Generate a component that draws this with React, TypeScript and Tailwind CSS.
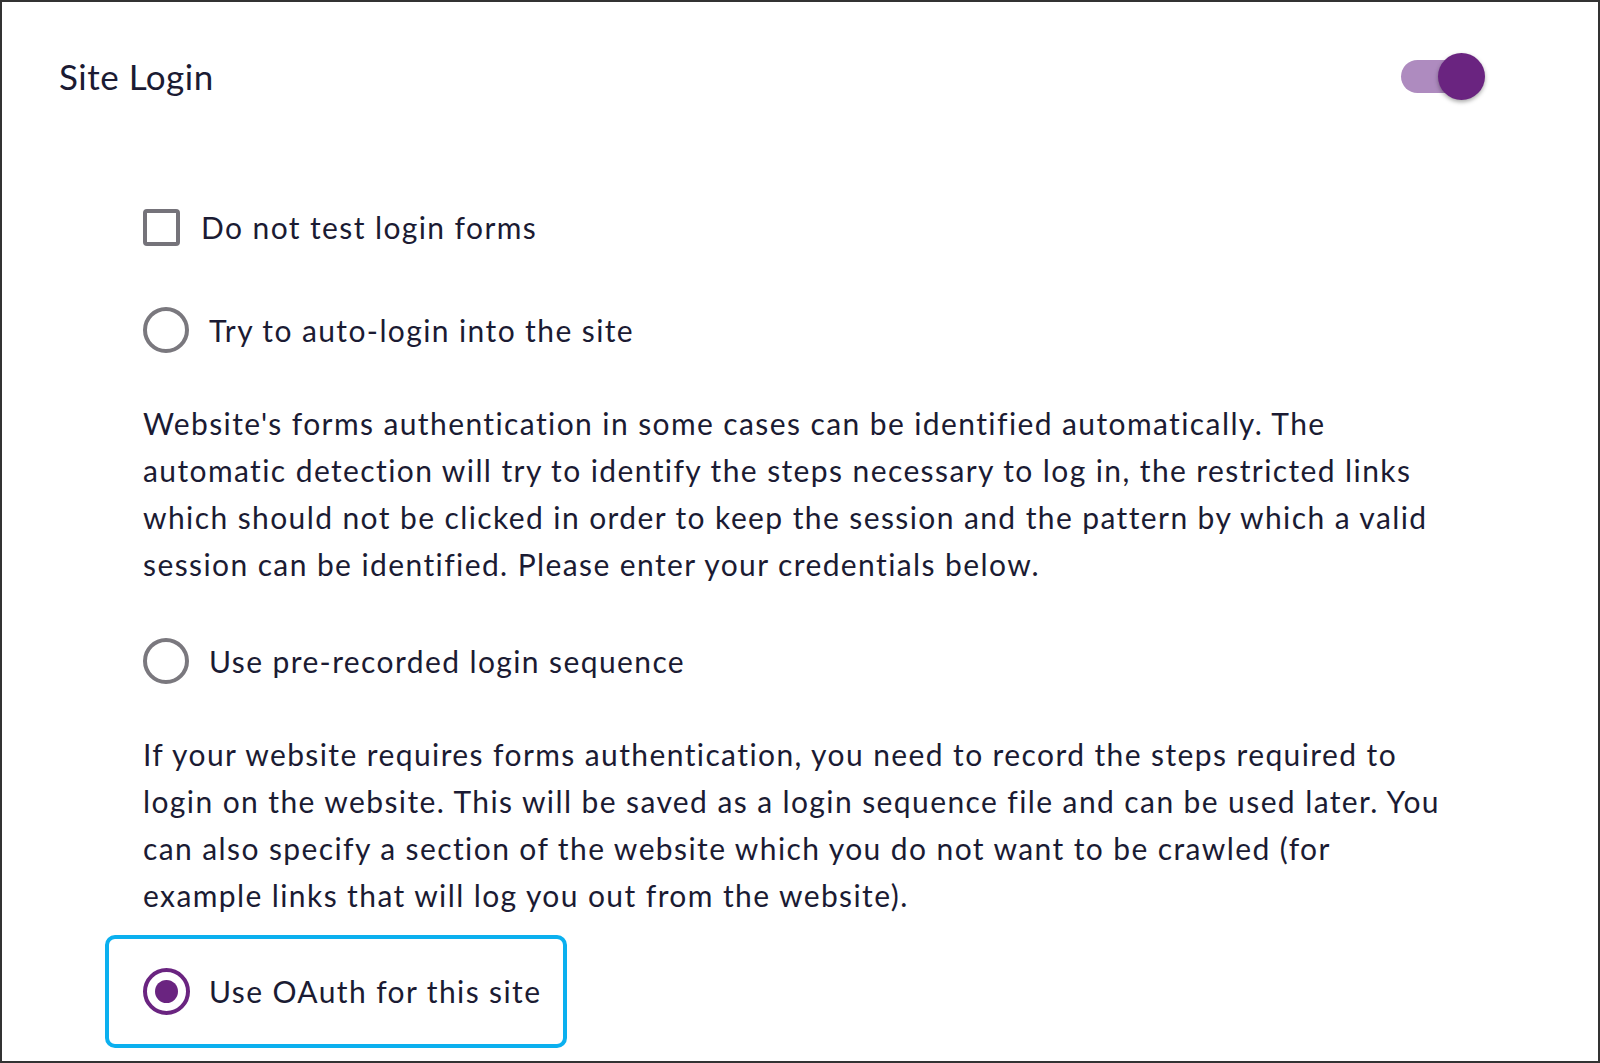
import React from 'react';

const font = { fontFamily: 'Lato, "Noto Sans", sans-serif' };

function Radio({ checked }: { checked?: boolean }) {
  if (checked) {
    return (
      <span className="flex h-[47px] w-[47px] shrink-0 items-center justify-center rounded-full border-[4px] border-[#6a2480] bg-white">
        <span className="h-[23px] w-[23px] rounded-full bg-[#6a2480]" />
      </span>
    );
  }
  return <span className="h-[46px] w-[46px] shrink-0 rounded-full border-[4px] border-[#7a787e] bg-white" />;
}

export default function App() {
  return (
    <div
      className="h-[1063px] w-[1600px] overflow-hidden border-2 border-[#333333] bg-white text-[#1b1b33]"
      style={font}
    >
      {/* Header */}
      <div className="flex h-[148px] items-center justify-between pl-[57px] pr-[113px]">
        <h1 className="text-[35px] font-normal tracking-[0.5px]">Site Login</h1>
        <div className="relative h-[47px] w-[84px]">
          <div className="absolute left-0 top-[7px] h-[33px] w-[74px] rounded-full bg-[#ae8bbf]" />
          <div className="absolute right-0 top-0 h-[47px] w-[47px] rounded-full bg-[#6a2480] shadow-[0_2px_4px_rgba(0,0,0,0.35)]" />
        </div>
      </div>

      {/* Options */}
      <div className="flex flex-col pl-[141px] text-[30px] tracking-[1.4px]">
        <label className="mt-[53px] flex h-[48px] items-center gap-[21px]">
          <span className="h-[37px] w-[37px] shrink-0 rounded-[4px] border-[4px] border-[#75737a] bg-white" />
          <span>Do not test login forms</span>
        </label>

        <label className="mt-[55px] flex h-[48px] items-center gap-[20px]">
          <Radio />
          <span>Try to auto-login into the site</span>
        </label>

        <p className="mt-[46px] leading-[47px]">
          Website's forms authentication in some cases can be identified automatically. The
          <br />
          automatic detection will try to identify the steps necessary to log in, the restricted links
          <br />
          which should not be clicked in order to keep the session and the pattern by which a valid
          <br />
          session can be identified. Please enter your credentials below.
        </p>

        <label className="mt-[49px] flex h-[48px] items-center gap-[20px]">
          <Radio />
          <span>Use pre-recorded login sequence</span>
        </label>

        <p className="mt-[46px] leading-[47px]">
          If your website requires forms authentication, you need to record the steps required to
          <br />
          login on the website. This will be saved as a login sequence file and can be used later. You
          <br />
          can also specify a section of the website which you do not want to be crawled (for
          <br />
          example links that will log you out from the website).
        </p>

        <div className="-ml-[38px] mt-[16px] flex h-[113px] w-[462px] items-center gap-[19px] rounded-[10px] border-[4px] border-[#0bb0ef] pl-[34px]">
          <Radio checked />
          <span>Use OAuth for this site</span>
        </div>
      </div>
    </div>
  );
}
